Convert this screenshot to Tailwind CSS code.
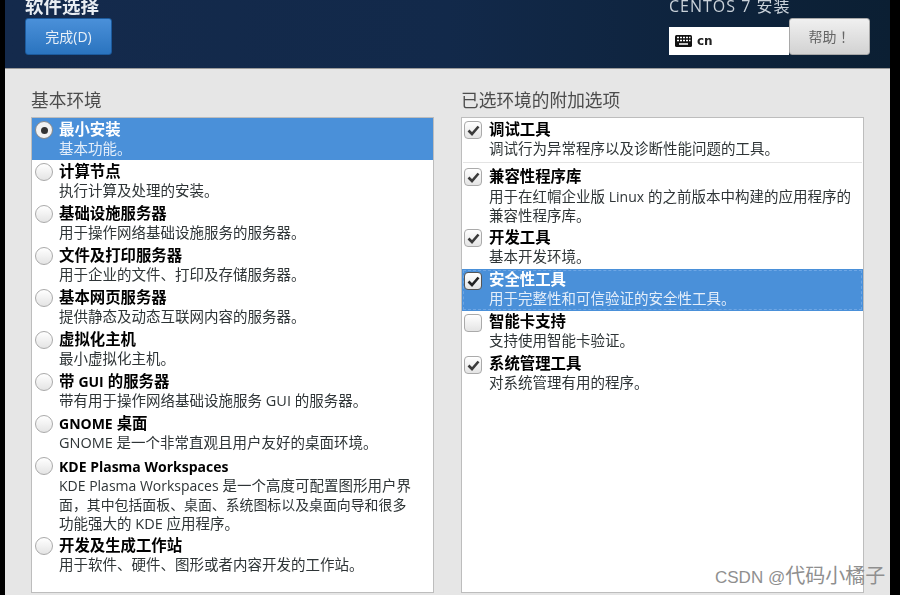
<!DOCTYPE html>
<html lang="zh-CN">
<head>
    <meta charset="UTF-8">
    <title>软件选择</title>
    <script src="https://cdn.jsdelivr.net/npm/@tailwindcss/browser@4"></script>
</head>
<body class="bg-black font-['Open_Sans','Noto_Sans_CJK_SC',sans-serif]">
<div class="relative w-[900px] h-[595px] overflow-hidden bg-black">
<div class="pl-[5px] pr-[10px] h-full blur-[0.5px]">

    <!-- Header -->
    <header class="h-[68px] bg-gradient-to-r from-[#142a4c] via-[#12294a] to-[#0b1f33] flex justify-between pl-5 pr-5 overflow-hidden">
        <div>
            <h1 class="-mt-[7px] h-[25px] leading-[25px] text-[18.5px] font-bold text-[#e8edf2]">软件选择</h1>
            <button class="w-[87px] h-[37px] rounded-[3px] border border-[#1c5a9c] bg-gradient-to-b from-[#4a90d9] to-[#2a74bf] text-[14px] text-[#e8f0f8]">完成(D)</button>
        </div>
        <div>
            <p class="-mt-[5px] h-[23px] leading-[23px] text-[16px] text-[#c9d1d9] tracking-[1px]">CENTOS 7 安装</p>
            <div class="flex items-start">
                <div class="mt-[9px] w-[120px] h-[28px] bg-white flex items-center gap-[5px] pl-1.5 text-[12px] font-bold text-[#222] font-['DejaVu_Sans',sans-serif]">
                    <svg width="17" height="12" viewBox="0 0 17 12">
                        <rect width="17" height="12" rx="1.5" fill="#111"/>
                        <path d="M2 2.5h2M5 2.5h2M8 2.5h2M11 2.5h2M14 2.5h1.500M2 5.500h2M5 5.500h2M8 5.500h2M11 5.500h2M14 5.500h1.500M4 9h9" stroke="#fff" stroke-width="1.500"/>
                    </svg>
                    cn
                </div>
                <button class="w-[81px] h-[37px] rounded-[3px] border border-[#a8a8a8] bg-gradient-to-b from-[#f0f0f0] to-[#d2d2d2] text-[14px] text-[#666]">帮助<span lang="ja" class="font-['Noto_Sans_CJK_JP',sans-serif]">！</span></button>
            </div>
        </div>
    </header>

    <!-- Content -->
    <main class="h-[527px] bg-[#e6e6e6] border-t border-[#9a9a9a] grid grid-cols-[403px_403px] gap-x-[27px] pl-[26px] text-[#2e3436]">
        <section>
            <h2 class="mt-[20px] h-[28px] leading-[22px] text-[17.7px] text-[#4c4c4c]">基本环境</h2>
            <ul class="h-[476px] bg-white border border-[#bdbdbd]">
                <li class="h-[42px] flex bg-[#4a90d9] text-white">
                    <span class="mt-[3px] ml-[3px] mr-[6px] size-[18px] rounded-full border border-[#888] bg-[#f2f2f2] flex items-center justify-center"><span class="size-[7px] rounded-full bg-[#333]"></span></span>
                    <div><p class="pt-[2px] text-[15.4px] font-bold leading-[19px]">最小安装</p><p class="text-[14.5px] leading-[20px] text-[#e4eefa]">基本功能。</p></div>
                </li>
                <li class="h-[42px] flex">
                    <span class="mt-[3px] ml-[3px] mr-[6px] size-[18px] rounded-full border border-[#aaa] bg-gradient-to-b from-[#fff] to-[#e4e4e4]"></span>
                    <div><p class="pt-[2px] text-[15.4px] font-bold leading-[19px] text-black">计算节点</p><p class="text-[14.5px] leading-[20px]">执行计算及处理的安装。</p></div>
                </li>
                <li class="h-[42px] flex">
                    <span class="mt-[3px] ml-[3px] mr-[6px] size-[18px] rounded-full border border-[#aaa] bg-gradient-to-b from-[#fff] to-[#e4e4e4]"></span>
                    <div><p class="pt-[2px] text-[15.4px] font-bold leading-[19px] text-black">基础设施服务器</p><p class="text-[14.5px] leading-[20px]">用于操作网络基础设施服务的服务器。</p></div>
                </li>
                <li class="h-[42px] flex">
                    <span class="mt-[3px] ml-[3px] mr-[6px] size-[18px] rounded-full border border-[#aaa] bg-gradient-to-b from-[#fff] to-[#e4e4e4]"></span>
                    <div><p class="pt-[2px] text-[15.4px] font-bold leading-[19px] text-black">文件及打印服务器</p><p class="text-[14.5px] leading-[20px]">用于企业的文件、打印及存储服务器。</p></div>
                </li>
                <li class="h-[42px] flex">
                    <span class="mt-[3px] ml-[3px] mr-[6px] size-[18px] rounded-full border border-[#aaa] bg-gradient-to-b from-[#fff] to-[#e4e4e4]"></span>
                    <div><p class="pt-[2px] text-[15.4px] font-bold leading-[19px] text-black">基本网页服务器</p><p class="text-[14.5px] leading-[20px]">提供静态及动态互联网内容的服务器。</p></div>
                </li>
                <li class="h-[42px] flex">
                    <span class="mt-[3px] ml-[3px] mr-[6px] size-[18px] rounded-full border border-[#aaa] bg-gradient-to-b from-[#fff] to-[#e4e4e4]"></span>
                    <div><p class="pt-[2px] text-[15.4px] font-bold leading-[19px] text-black">虚拟化主机</p><p class="text-[14.5px] leading-[20px]">最小虚拟化主机。</p></div>
                </li>
                <li class="h-[42px] flex">
                    <span class="mt-[3px] ml-[3px] mr-[6px] size-[18px] rounded-full border border-[#aaa] bg-gradient-to-b from-[#fff] to-[#e4e4e4]"></span>
                    <div><p class="pt-[2px] text-[15.4px] font-bold leading-[19px] text-black">带 <span class="text-[14px]">GUI</span> 的服务器</p><p class="text-[14.5px] leading-[20px]">带有用于操作网络基础设施服务 GUI 的服务器。</p></div>
                </li>
                <li class="h-[42px] flex">
                    <span class="mt-[3px] ml-[3px] mr-[6px] size-[18px] rounded-full border border-[#aaa] bg-gradient-to-b from-[#fff] to-[#e4e4e4]"></span>
                    <div><p class="pt-[2px] text-[15.4px] font-bold leading-[19px] text-black"><span class="text-[14px]">GNOME</span> 桌面</p><p class="text-[14.5px] leading-[20px]">GNOME 是一个非常直观且用户友好的桌面环境。</p></div>
                </li>
                <li class="h-[80px] flex">
                    <span class="mt-[3px] ml-[3px] mr-[6px] size-[18px] rounded-full border border-[#aaa] bg-gradient-to-b from-[#fff] to-[#e4e4e4]"></span>
                    <div><p class="pt-[3px] text-[14px] font-bold leading-[20px] text-black">KDE Plasma Workspaces</p><p class="-mt-px text-[14.5px] leading-[19px]"><span class="text-[14px]">KDE Plasma Workspaces</span> 是一个高度可配置图形用户界<br><span class="text-[13.9px]">面，其中包括面板、桌面、系统图标以及桌面向导和很多</span><br>功能强大的 KDE 应用程序。</p></div>
                </li>
                <li class="h-[42px] flex">
                    <span class="mt-[3px] ml-[3px] mr-[6px] size-[18px] rounded-full border border-[#aaa] bg-gradient-to-b from-[#fff] to-[#e4e4e4]"></span>
                    <div><p class="pt-[2px] text-[15.4px] font-bold leading-[19px] text-black">开发及生成工作站</p><p class="text-[14.5px] leading-[20px]">用于软件、硬件、图形或者内容开发的工作站。</p></div>
                </li>
            </ul>
        </section>

        <section>
            <h2 class="mt-[20px] h-[28px] leading-[22px] text-[17.7px] text-[#4c4c4c]">已选环境的附加选项</h2>
            <ul class="h-[476px] bg-white border border-[#bdbdbd]">
                <li class="h-[45px] flex border-b border-[#e4e4e4] mx-px">
                    <span class="mt-[3px] ml-[1px] mr-[7px] size-[18px] rounded-[4px] border border-[#aaa] bg-gradient-to-b from-[#fff] to-[#e4e4e4] flex items-center justify-center"><svg width="13" height="11" viewBox="0 0 13 11"><path d="M1.500 5.500 5 9 11.500 1.500" fill="none" stroke="#3a3a3a" stroke-width="2.600"/></svg></span>
                    <div><p class="pt-[2px] text-[15.4px] font-bold leading-[19px] text-black">调试工具</p><p class="text-[14.5px] leading-[20px]">调试行为异常程序以及诊断性能问题的工具。</p></div>
                </li>
                <li class="h-[61px] flex mx-px pt-[2px]">
                    <span class="mt-[3px] ml-[1px] mr-[7px] size-[18px] rounded-[4px] border border-[#aaa] bg-gradient-to-b from-[#fff] to-[#e4e4e4] flex items-center justify-center"><svg width="13" height="11" viewBox="0 0 13 11"><path d="M1.500 5.500 5 9 11.500 1.500" fill="none" stroke="#3a3a3a" stroke-width="2.600"/></svg></span>
                    <div><p class="pt-[2px] text-[15.4px] font-bold leading-[19px] text-black">兼容性程序库</p><p class="mt-px text-[14.5px] leading-[19px]">用于在红帽企业版 <span class="text-[14px]">Linux</span> 的之前版本中构建的应用程序的<br>兼容性程序库。</p></div>
                </li>
                <li class="h-[44px] flex mx-px pt-[2px]">
                    <span class="mt-[3px] ml-[1px] mr-[7px] size-[18px] rounded-[4px] border border-[#aaa] bg-gradient-to-b from-[#fff] to-[#e4e4e4] flex items-center justify-center"><svg width="13" height="11" viewBox="0 0 13 11"><path d="M1.500 5.500 5 9 11.500 1.500" fill="none" stroke="#3a3a3a" stroke-width="2.600"/></svg></span>
                    <div><p class="pt-[2px] text-[15.4px] font-bold leading-[19px] text-black">开发工具</p><p class="text-[14.5px] leading-[20px]">基本开发环境。</p></div>
                </li>
                <li class="h-[42px] mt-px flex bg-[#4a90d9] text-white outline outline-dashed outline-1 -outline-offset-2 outline-[#6ea6e4]">
                    <span class="mt-[3px] ml-[2px] mr-[7px] size-[18px] rounded-[4px] border border-[#555] bg-gradient-to-b from-[#fff] to-[#e4e4e4] flex items-center justify-center"><svg width="13" height="11" viewBox="0 0 13 11"><path d="M1.500 5.500 5 9 11.500 1.500" fill="none" stroke="#222" stroke-width="2.600"/></svg></span>
                    <div><p class="pt-[1px] text-[15.4px] font-bold leading-[19px]">安全性工具</p><p class="text-[14.5px] leading-[20px] text-[#e4eefa]">用于完整性和可信验证的安全性工具。</p></div>
                </li>
                <li class="h-[42px] flex mx-px">
                    <span class="mt-[3px] ml-[1px] mr-[7px] size-[18px] rounded-[4px] border border-[#aaa] bg-gradient-to-b from-[#fff] to-[#e4e4e4]"></span>
                    <div><p class="pt-[1px] text-[15.4px] font-bold leading-[19px] text-black">智能卡支持</p><p class="text-[14.5px] leading-[20px]">支持使用智能卡验证。</p></div>
                </li>
                <li class="h-[42px] flex mx-px">
                    <span class="mt-[3px] ml-[1px] mr-[7px] size-[18px] rounded-[4px] border border-[#aaa] bg-gradient-to-b from-[#fff] to-[#e4e4e4] flex items-center justify-center"><svg width="13" height="11" viewBox="0 0 13 11"><path d="M1.500 5.500 5 9 11.500 1.500" fill="none" stroke="#3a3a3a" stroke-width="2.600"/></svg></span>
                    <div><p class="pt-[1px] text-[15.4px] font-bold leading-[19px] text-black">系统管理工具</p><p class="text-[14.5px] leading-[20px]">对系统管理有用的程序。</p></div>
                </li>
            </ul>
        </section>
    </main>
</div>

    <!-- Watermark over the page -->
    <p class="absolute left-[715px] top-[564px] whitespace-nowrap text-[17px] leading-[24px] text-[#8f8f8f] font-['Liberation_Sans','Noto_Sans_CJK_SC',sans-serif]">CSDN @<span class="text-[20px]">代码小橘子</span></p>
</div>
</body>
</html>
